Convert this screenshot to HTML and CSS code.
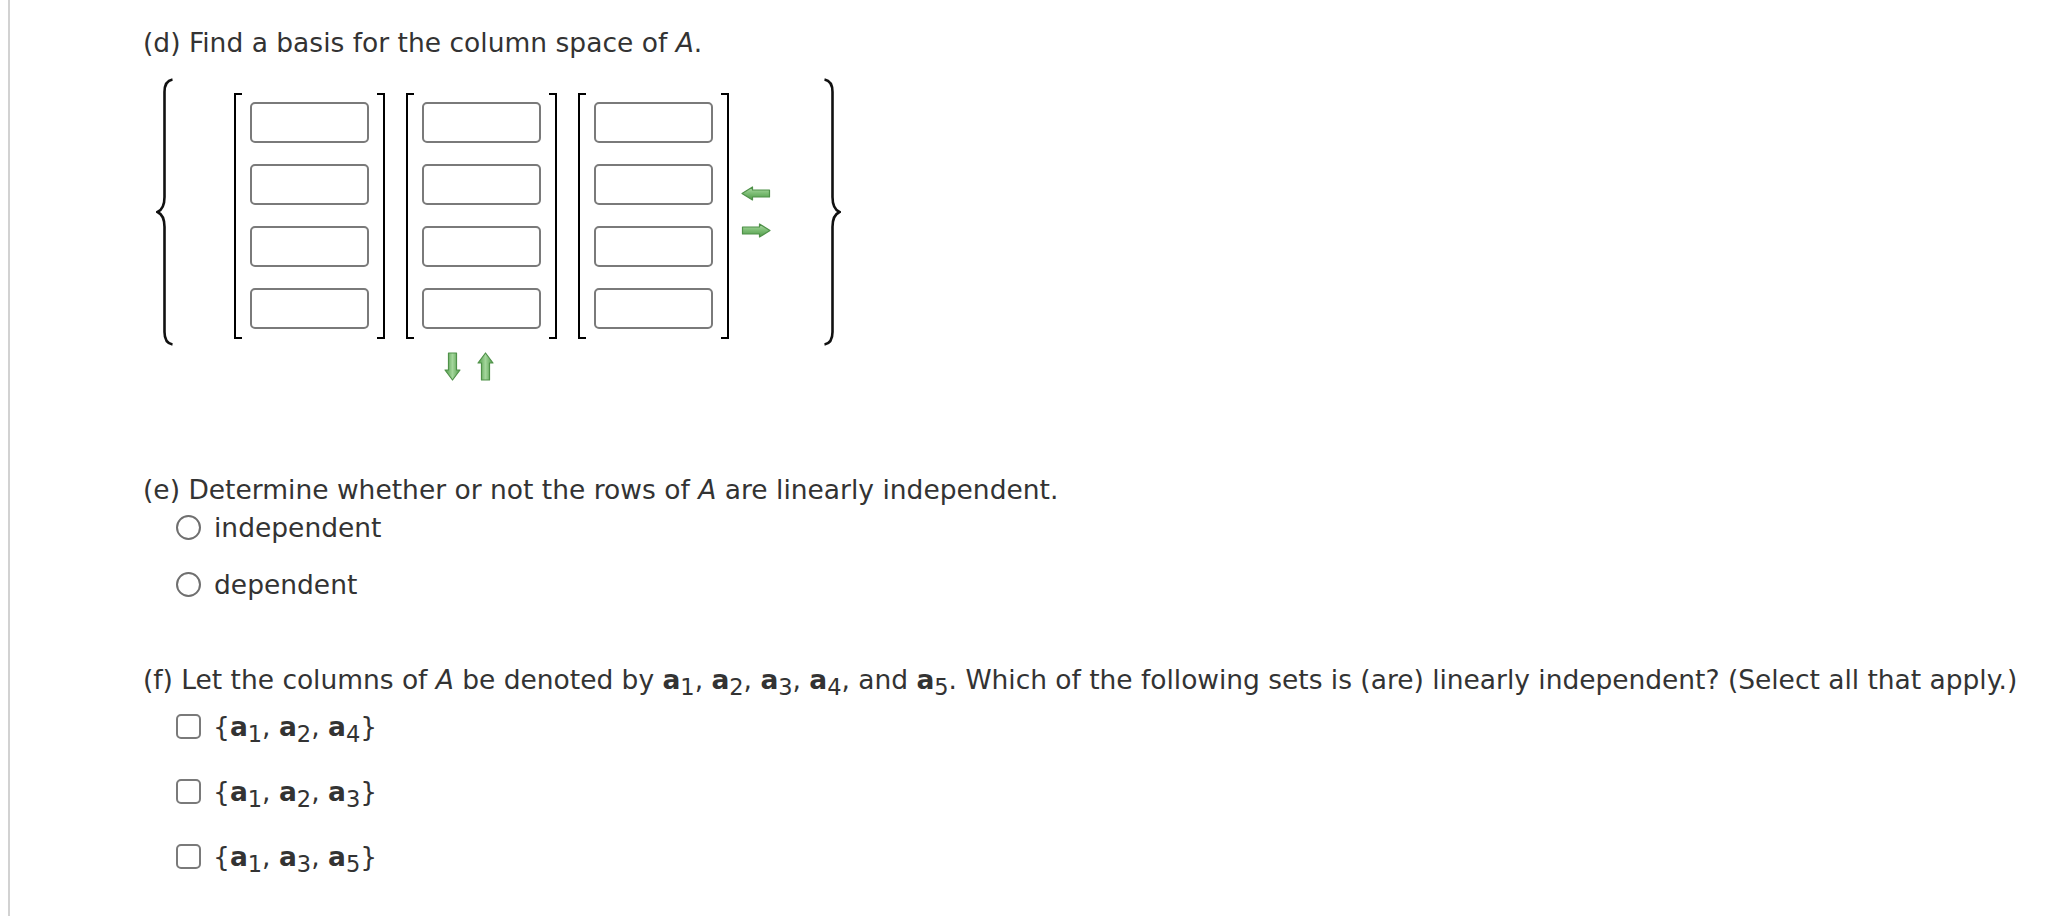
FILE: index.html
```html
<!DOCTYPE html>
<html>
<head>
<meta charset="utf-8">
<link rel="stylesheet" href="styles.css">
</head>
<body>
<div class="page">
  <div class="part part-d">
    <div class="prompt">(d) Find a basis for the column space of <i>A</i>.</div>
    <div class="basis">
      <svg class="brace" width="18" height="268" viewBox="0 0 18 268">
        <path d="M16.5 1.5 C11 2.5 8.5 6 8.5 14 L8.5 119 C8.5 128 6 132 1.5 134 C6 136 8.5 140 8.5 149 L8.5 254 C8.5 262 11 265.5 16.5 266.5" fill="none" stroke="#111" stroke-width="2.6"/>
      </svg>
      <div class="vectors">
        <div class="matrix">
          <div class="bl"></div>
          <div class="col"><span class="box"></span><span class="box"></span><span class="box"></span><span class="box"></span></div>
          <div class="br"></div>
        </div>
        <div class="matrix">
          <div class="bl"></div>
          <div class="col"><span class="box"></span><span class="box"></span><span class="box"></span><span class="box"></span></div>
          <div class="br"></div>
        </div>
        <div class="matrix">
          <div class="bl"></div>
          <div class="col"><span class="box"></span><span class="box"></span><span class="box"></span><span class="box"></span></div>
          <div class="br"></div>
        </div>
      </div>
      <div class="harrows">
        <svg width="30" height="15" viewBox="0 0 30 15">
          <defs>
            <linearGradient id="gh" x1="0" y1="0" x2="0" y2="1">
              <stop offset="0" stop-color="#b3dcab"/>
              <stop offset="0.45" stop-color="#7fbf77"/>
              <stop offset="1" stop-color="#4f9a48"/>
            </linearGradient>
          </defs>
          <path d="M1 7.5 L11.5 1 L11.5 4 L28.5 4 L28.5 11 L11.5 11 L11.5 14 Z" fill="url(#gh)" stroke="#4f9149" stroke-width="1.2" stroke-linejoin="round"/>
        </svg>
        <svg width="30" height="15" viewBox="0 0 30 15">
          <path d="M29 7.5 L18.5 1 L18.5 4 L1.5 4 L1.5 11 L18.5 11 L18.5 14 Z" fill="url(#gh)" stroke="#4f9149" stroke-width="1.2" stroke-linejoin="round"/>
        </svg>
      </div>
      <svg class="brace brace-r" width="18" height="268" viewBox="0 0 18 268">
        <path d="M1.5 1.5 C7 2.5 9.5 6 9.5 14 L9.5 119 C9.5 128 12 132 16.5 134 C12 136 9.5 140 9.5 149 L9.5 254 C9.5 262 7 265.5 1.5 266.5" fill="none" stroke="#111" stroke-width="2.6"/>
      </svg>
    </div>
    <div class="varrows">
      <svg width="17" height="29" viewBox="0 0 17 29">
        <defs>
          <linearGradient id="gv" x1="0" y1="0" x2="1" y2="0">
            <stop offset="0" stop-color="#4f9a48"/>
            <stop offset="0.5" stop-color="#a3d69b"/>
            <stop offset="1" stop-color="#4f9a48"/>
          </linearGradient>
        </defs>
        <path d="M4.5 1 L12.5 1 L12.5 18 L16 18 L8.5 28 L1 18 L4.5 18 Z" fill="url(#gv)" stroke="#4f9149" stroke-width="1.2" stroke-linejoin="round"/>
      </svg>
      <svg width="17" height="29" viewBox="0 0 17 29">
        <path d="M4.5 28 L12.5 28 L12.5 11 L16 11 L8.5 1 L1 11 L4.5 11 Z" fill="url(#gv)" stroke="#4f9149" stroke-width="1.2" stroke-linejoin="round"/>
      </svg>
    </div>
  </div>

  <div class="part part-e">
    <div class="prompt">(e) Determine whether or not the rows of <i>A</i> are linearly independent.</div>
    <div class="options radios">
      <label class="option"><span class="radio"></span><span>independent</span></label>
      <label class="option"><span class="radio"></span><span>dependent</span></label>
    </div>
  </div>

  <div class="part part-f">
    <div class="prompt">(f) Let the columns of <i>A</i> be denoted by <b>a</b><sub>1</sub>, <b>a</b><sub>2</sub>, <b>a</b><sub>3</sub>, <b>a</b><sub>4</sub>, and <b>a</b><sub>5</sub>. Which of the following sets is (are) linearly independent? (Select all that apply.)</div>
    <div class="options checks">
      <label class="option"><span class="check"></span><span>{<b>a</b><sub>1</sub>, <b>a</b><sub>2</sub>, <b>a</b><sub>4</sub>}</span></label>
      <label class="option"><span class="check"></span><span>{<b>a</b><sub>1</sub>, <b>a</b><sub>2</sub>, <b>a</b><sub>3</sub>}</span></label>
      <label class="option"><span class="check"></span><span>{<b>a</b><sub>1</sub>, <b>a</b><sub>3</sub>, <b>a</b><sub>5</sub>}</span></label>
    </div>
  </div>
</div>
</body>
</html>
```
FILE: styles.css
```css
html, body {
  margin: 0;
  padding: 0;
  background: #fff;
}
body {
  font-family: "DejaVu Sans", Verdana, sans-serif;
  font-size: 26.5px;
  color: #333;
}
.page {
  margin-left: 8px;
  border-left: 2px solid #d2d2d2;
  min-height: 916px;
  box-sizing: border-box;
  padding-left: 133px;
  padding-top: 27px;
}
.prompt {
  line-height: 32px;
  white-space: nowrap;
}
.prompt i { font-style: italic; }
.part-f .prompt { letter-spacing: -0.03px; }
b { font-weight: bold; }
sub {
  font-size: 0.85em;
  line-height: 0;
  vertical-align: -0.28em;
}

/* (d) basis widget */
.basis {
  display: flex;
  align-items: flex-start;
  margin-top: 19px;
  margin-left: 13px;
}
.brace { display: block; flex: none; }
.vectors {
  display: flex;
  gap: 21px;
  margin-left: 60px;
  margin-top: 15px;
}
.matrix {
  display: flex;
}
.bl, .br {
  width: 6px;
  border: 2px solid #000;
}
.bl { border-right: none; }
.br { border-left: none; }
.col {
  display: flex;
  flex-direction: column;
  gap: 21px;
  padding: 9px 8px 10px 8px;
}
.box {
  display: block;
  width: 115px;
  height: 37px;
  border: 2px solid #7a7a7a;
  border-radius: 5px;
  background: #fff;
}
.harrows {
  display: flex;
  flex-direction: column;
  gap: 22px;
  margin-left: 12px;
  align-self: center;
}
.harrows svg, .varrows svg { display: block; }
.brace-r { margin-left: 52px; }
.varrows {
  display: flex;
  gap: 16px;
  margin-top: 6px;
  margin-left: 301px;
}

/* (e) */
.part-e { margin-top: 93px; }
.options {
  display: flex;
  flex-direction: column;
  margin-left: 33px;
}
.radios { gap: 17px; margin-top: 1px; }
.option {
  display: flex;
  align-items: center;
  height: 40px;
  gap: 13px;
}
.radio {
  display: block;
  width: 21px;
  height: 21px;
  border: 2px solid #6f6f6f;
  border-radius: 50%;
  flex: none;
}

/* (f) */
.part-f { margin-top: 60px; }
.checks {
  gap: 21px;
  margin-top: 8px;
}
.checks .option { height: 44px; gap: 12px; }
.check {
  display: block;
  width: 21px;
  height: 21px;
  border: 2px solid #7a7a7a;
  border-radius: 5px;
  flex: none;
}
```
